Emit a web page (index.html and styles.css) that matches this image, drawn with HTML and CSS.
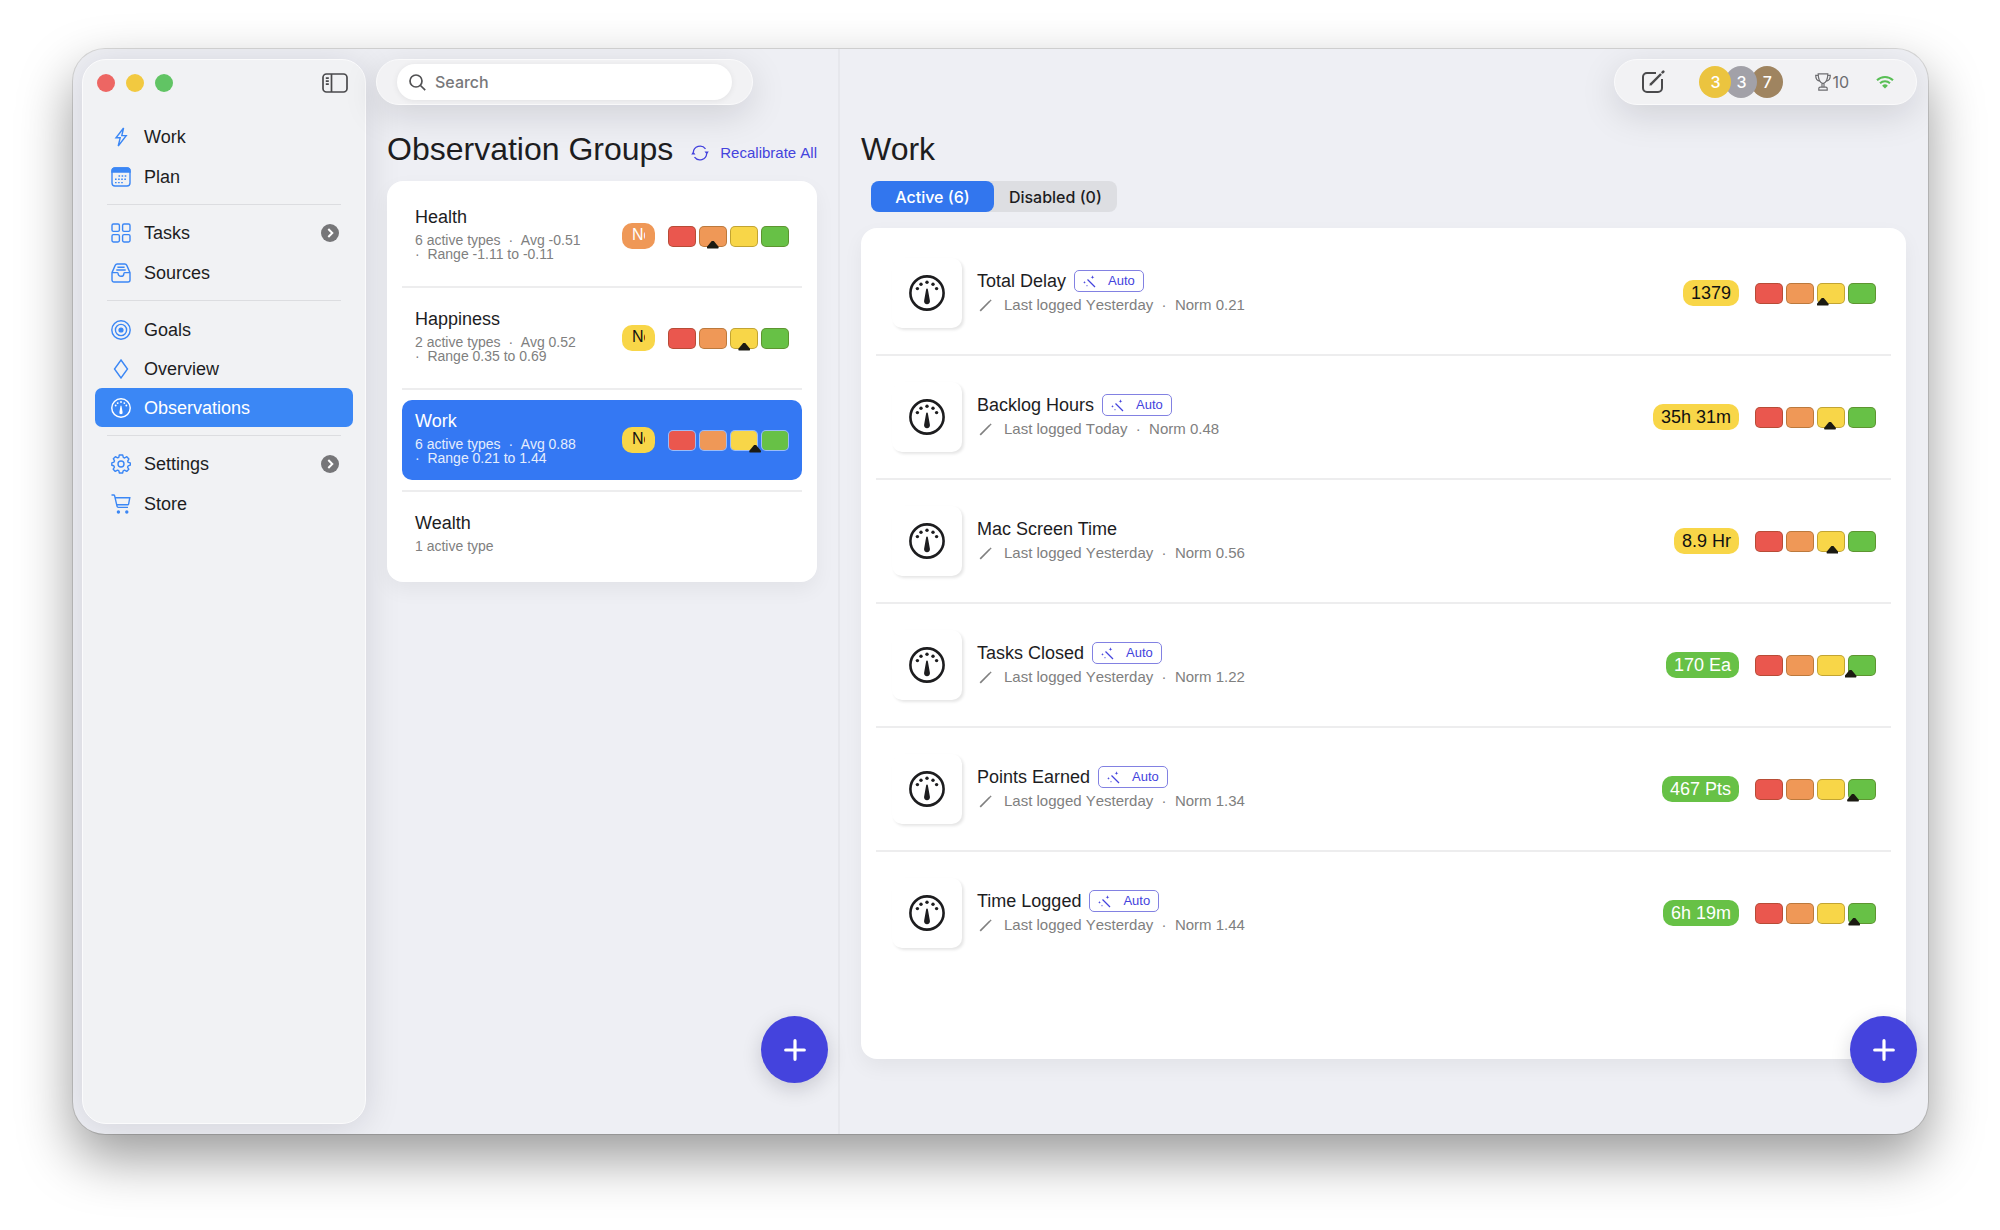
FILE: index.html
```html
<!DOCTYPE html>
<html lang="en">
<head>
<meta charset="utf-8">
<meta name="viewport" content="width=device-width, initial-scale=1">
<title>Observations</title>
<link rel="stylesheet" href="styles.css">
</head>
<body>
<svg class="sprite" aria-hidden="true">
  <symbol id="i-bolt" viewBox="0 0 20 20"><path d="M12.6 1 5 10.8h4.2L7.2 19l8-10.4H10.8z"/></symbol>
  <symbol id="i-calendar" viewBox="0 0 20 20"><rect x="1" y="1" width="18" height="18" rx="3"/><path d="M1 5V4a3 3 0 0 1 3-3h12a3 3 0 0 1 3 3v1z" fill="currentColor"/><path d="M7.5 9h8.5M4 12.3h12M4 15.6h8.5" stroke-dasharray="1.6 1.5"/></symbol>
  <symbol id="i-grid" viewBox="0 0 20 20"><rect x="1" y="1" width="7.4" height="7.4" rx="1.4"/><rect x="11.6" y="1" width="7.4" height="7.4" rx="1.4"/><rect x="1" y="11.6" width="7.4" height="7.4" rx="1.4"/><rect x="11.6" y="11.6" width="7.4" height="7.4" rx="1.4"/></symbol>
  <symbol id="i-tray" viewBox="0 0 20 20"><path d="M1 9.6 4.2 2.4Q4.8 1 6.2 1h7.6q1.4 0 2 1.4L19 9.6V17a2 2 0 0 1-2 2H3a2 2 0 0 1-2-2zM1 9.6h5.4c.5 0 .7.3.7.8a2.9 2.9 0 0 0 5.8 0c0-.5.2-.8.7-.8H19M6.4 4.3h7.2M5.3 7h9.4"/></symbol>
  <symbol id="i-target" viewBox="0 0 20 20"><circle cx="10" cy="10" r="9.2"/><circle cx="10" cy="10" r="5.6"/><circle cx="10" cy="10" r="1.900" fill="currentColor"/></symbol>
  <symbol id="i-diamond" viewBox="0 0 20 20"><path d="M10 1 16.5 10 10 19 3.500 10z"/></symbol>
  <symbol id="i-gauge" viewBox="0 0 36 36"><circle cx="18" cy="18" r="16.600"/><g fill="currentColor" stroke="none"><circle cx="8.400" cy="13.600" r="1.700"/><circle cx="12" cy="9.200" r="1.700"/><circle cx="18" cy="7.300" r="1.700"/><circle cx="24" cy="9.200" r="1.700"/><circle cx="27.600" cy="13.600" r="1.700"/><path d="M18 13.500c.5 0 .8.4.9.9l2 11.300a2.950 2.950 0 1 1-5.800 0l2-11.300c.1-.5.4-.9.9-.9z"/></g></symbol>
  <symbol id="i-gear" viewBox="0 0 20 20"><path d="M8.300 1h3.400l.6 2.400 1.300.6 2.200-1.300 2.100 2.200-1.200 2.200.5 1.300 2.100.5v2.300l-2.100.6-.6 1.300 1.200 2.200-2.100 2.100-2.200-1.200-1.300.6-.6 2.200H8.400l-.6-2.300-1.300-.5-2.200 1.200-2.100-2.200 1.200-2.100-.6-1.300L.8 11.300V8.800l2.100-.6.600-1.300-1.200-2.200 2.100-2 2.200 1.200 1.200-.6z" stroke-linejoin="round"/><circle cx="10" cy="10" r="3"/></symbol>
  <symbol id="i-cart" viewBox="0 0 20 20"><path d="M.5 1h2.300q.6 0 .8.700L6 12.200q.2 1.200 1.400 1.200h9.600M4.200 3.700h14.600l-1.200 6.400q-.1.700-.9.700H5.900"/><circle cx="7.400" cy="18" r="1" fill="currentColor"/><circle cx="15.800" cy="18" r="1" fill="currentColor"/></symbol>
  <symbol id="i-sidebar" viewBox="0 0 26 20"><rect x="1" y="1" width="24" height="18" rx="3.500"/><path d="M9.500 1v18M3.800 5.200h3M3.800 8.200h3M3.800 11.200h3"/></symbol>
  <symbol id="i-search" viewBox="0 0 17 17"><circle cx="7" cy="7" r="6"/><path d="m11.500 11.500 4.700 4.700"/></symbol>
  <symbol id="i-cycle" viewBox="0 0 18 18"><path d="M2.300 8.500a6.800 6.800 0 0 1 12.200-3.700M15.700 9.500A6.800 6.800 0 0 1 3.500 13.200"/><path d="m.2 10.500 2-3 2.300 3zM13.500 7.500l2.300 3 2-3z" fill="currentColor" stroke="none"/></symbol>
  <symbol id="i-wand" viewBox="0 0 13 13"><path d="m4.500 4.500 7.500 7.500" stroke-width="1.300"/><path d="M9.500.3l.5 1.400 1.400.5-1.400.5-.5 1.400-.5-1.400-1.400-.5L9 1.700zM1.500 5.900l.4 1 1 .4-1 .4-.4 1-.4-1-1-.4 1-.4zM4 9.800l.3.700.7.300-.7.300-.3.700-.3-.7-.7-.3.700-.3z" fill="currentColor" stroke="none"/></symbol>
  <symbol id="i-pencil" viewBox="0 0 13 13"><path d="M1.200 11.800 11 2" stroke-width="1.700"/><path d="m11.200 1.800.8-.8" stroke-width="1.700"/></symbol>
  <symbol id="i-compose" viewBox="0 0 24 24"><path d="M15 3H6a4 4 0 0 0-4 4v11a4 4 0 0 0 4 4h11a4 4 0 0 0 4-4V9"/><path d="M9.200 14.800 20 4" stroke-width="2.400"/><path d="m21.600 2.400.7-.7" stroke-width="2.600" stroke-linecap="round"/><path d="m8.300 15.700 1-2.200 1.200 1.200z" fill="currentColor" stroke="none"/></symbol>
  <symbol id="i-trophy" viewBox="0 0 16 18"><path d="M3.200.8h9.600c0 5.200-1 8.800-4.800 9.700-3.800-.9-4.800-4.500-4.800-9.700zM3.200 2.300H.7c0 3.200 1 5.400 3.900 5.900M12.800 2.300h2.500c0 3.200-1 5.400-3.900 5.900M7 10.400v3.800M9 10.400v3.800M3.800 17.200v-1.600q0-1.400 1.400-1.400h5.600q1.400 0 1.400 1.400v1.600z"/></symbol>
  <symbol id="i-wifi" viewBox="0 0 18 14"><path d="M1 5.200a11.500 11.500 0 0 1 16 0M4 8.300a7.200 7.200 0 0 1 10 0"/><path d="m9 13.600-2.900-2.900a4.200 4.200 0 0 1 5.800 0z" fill="currentColor" stroke="none"/></symbol>
  <symbol id="i-plus" viewBox="0 0 22 22"><path d="M11 1.700v18.600M1.700 11h18.600"/></symbol>
  <symbol id="i-chevron" viewBox="0 0 18 18"><path d="m7.300 5 4 4-4 4"/></symbol>
</svg>

<div class="window">
  <aside class="sidebar">
    <div class="titlebar">
      <button class="light light-close" aria-label="Close"></button>
      <button class="light light-min" aria-label="Minimize"></button>
      <button class="light light-zoom" aria-label="Zoom"></button>
      <button class="toggle" aria-label="Toggle sidebar"><svg class="icon"><use href="#i-sidebar"/></svg></button>
    </div>
    <nav aria-label="Main">
      <ul class="nav-group">
        <li><a class="nav-item" href="#work"><svg class="icon"><use href="#i-bolt"/></svg>Work</a></li>
        <li><a class="nav-item" href="#plan"><svg class="icon"><use href="#i-calendar"/></svg>Plan</a></li>
      </ul>
      <ul class="nav-group">
        <li><a class="nav-item" href="#tasks"><svg class="icon"><use href="#i-grid"/></svg>Tasks<svg class="more"><use href="#i-chevron"/></svg></a></li>
        <li><a class="nav-item" href="#sources"><svg class="icon"><use href="#i-tray"/></svg>Sources</a></li>
      </ul>
      <ul class="nav-group nav-group-tight">
        <li><a class="nav-item" href="#goals"><svg class="icon"><use href="#i-target"/></svg>Goals</a></li>
        <li><a class="nav-item" href="#overview"><svg class="icon"><use href="#i-diamond"/></svg>Overview</a></li>
        <li><a class="nav-item nav-current" href="#observations" aria-current="page"><svg class="icon icon-gauge"><use href="#i-gauge"/></svg>Observations</a></li>
      </ul>
      <ul class="nav-group">
        <li><a class="nav-item" href="#settings"><svg class="icon"><use href="#i-gear"/></svg>Settings<svg class="more"><use href="#i-chevron"/></svg></a></li>
        <li><a class="nav-item" href="#store"><svg class="icon"><use href="#i-cart"/></svg>Store</a></li>
      </ul>
    </nav>
  </aside>

  <section class="pane groups-pane">
    <div class="pill search-pill">
      <label class="search"><svg class="icon"><use href="#i-search"/></svg><input type="search" placeholder="Search" aria-label="Search"></label>
    </div>
    <header class="pane-head">
      <h1>Observation Groups</h1>
      <button class="recalibrate"><svg class="icon"><use href="#i-cycle"/></svg>Recalibrate All</button>
    </header>
    <ul class="card groups">
      <li><a class="group" href="#health">
        <span class="group-text"><span class="title">Health</span><span class="meta">6 active types&nbsp; · &nbsp;Avg -0.51<br>·&nbsp; Range -1.11 to -0.11</span></span>
        <span class="badge badge-clip badge-orange"><span>No</span></span>
        <span class="scale"><i></i><i></i><i></i><i></i><b style="left:37%"></b></span>
      </a></li>
      <li><a class="group" href="#happiness">
        <span class="group-text"><span class="title">Happiness</span><span class="meta">2 active types&nbsp; · &nbsp;Avg 0.52<br>·&nbsp; Range 0.35 to 0.69</span></span>
        <span class="badge badge-clip badge-yellow"><span>No</span></span>
        <span class="scale"><i></i><i></i><i></i><i></i><b style="left:63%"></b></span>
      </a></li>
      <li><a class="group group-current" href="#work-group" aria-current="true">
        <span class="group-text"><span class="title">Work</span><span class="meta">6 active types&nbsp; · &nbsp;Avg 0.88<br>·&nbsp; Range 0.21 to 1.44</span></span>
        <span class="badge badge-clip badge-yellow"><span>No</span></span>
        <span class="scale"><i></i><i></i><i></i><i></i><b style="left:72%"></b></span>
      </a></li>
      <li><a class="group" href="#wealth">
        <span class="group-text"><span class="title">Wealth</span><span class="meta">1 active type</span></span>
      </a></li>
    </ul>
    <button class="fab" aria-label="Add group"><svg class="icon"><use href="#i-plus"/></svg></button>
  </section>

  <main class="pane detail-pane">
    <div class="pill status-pill">
      <button class="compose" aria-label="Compose"><svg class="icon"><use href="#i-compose"/></svg></button>
      <span class="medals"><span class="medal gold">3</span><span class="medal silver">3</span><span class="medal bronze">7</span></span>
      <span class="trophies"><svg class="icon"><use href="#i-trophy"/></svg>10</span>
      <svg class="icon wifi"><use href="#i-wifi"/></svg>
    </div>
    <header class="pane-head"><h2>Work</h2></header>
    <div class="segmented">
      <button class="segment segment-on" aria-pressed="true">Active (6)</button>
      <button class="segment" aria-pressed="false">Disabled (0)</button>
    </div>
    <ul class="card types">
      <li class="type">
        <span class="tile"><svg class="icon"><use href="#i-gauge"/></svg></span>
        <div class="type-text"><div class="type-name">Total Delay<span class="tag"><svg class="icon"><use href="#i-wand"/></svg>Auto</span></div>
        <div class="type-meta"><svg class="icon"><use href="#i-pencil"/></svg>Last logged Yesterday&nbsp; · &nbsp;Norm 0.21</div></div>
        <span class="badge badge-yellow">1379</span>
        <span class="scale"><i></i><i></i><i></i><i></i><b style="left:56%"></b></span>
      </li>
      <li class="type">
        <span class="tile"><svg class="icon"><use href="#i-gauge"/></svg></span>
        <div class="type-text"><div class="type-name">Backlog Hours<span class="tag"><svg class="icon"><use href="#i-wand"/></svg>Auto</span></div>
        <div class="type-meta"><svg class="icon"><use href="#i-pencil"/></svg>Last logged Today&nbsp; · &nbsp;Norm 0.48</div></div>
        <span class="badge badge-yellow">35h 31m</span>
        <span class="scale"><i></i><i></i><i></i><i></i><b style="left:62%"></b></span>
      </li>
      <li class="type">
        <span class="tile"><svg class="icon"><use href="#i-gauge"/></svg></span>
        <div class="type-text"><div class="type-name">Mac Screen Time</div>
        <div class="type-meta"><svg class="icon"><use href="#i-pencil"/></svg>Last logged Yesterday&nbsp; · &nbsp;Norm 0.56</div></div>
        <span class="badge badge-yellow">8.9 Hr</span>
        <span class="scale"><i></i><i></i><i></i><i></i><b style="left:64%"></b></span>
      </li>
      <li class="type">
        <span class="tile"><svg class="icon"><use href="#i-gauge"/></svg></span>
        <div class="type-text"><div class="type-name">Tasks Closed<span class="tag"><svg class="icon"><use href="#i-wand"/></svg>Auto</span></div>
        <div class="type-meta"><svg class="icon"><use href="#i-pencil"/></svg>Last logged Yesterday&nbsp; · &nbsp;Norm 1.22</div></div>
        <span class="badge badge-green">170 Ea</span>
        <span class="scale"><i></i><i></i><i></i><i></i><b style="left:79%"></b></span>
      </li>
      <li class="type">
        <span class="tile"><svg class="icon"><use href="#i-gauge"/></svg></span>
        <div class="type-text"><div class="type-name">Points Earned<span class="tag"><svg class="icon"><use href="#i-wand"/></svg>Auto</span></div>
        <div class="type-meta"><svg class="icon"><use href="#i-pencil"/></svg>Last logged Yesterday&nbsp; · &nbsp;Norm 1.34</div></div>
        <span class="badge badge-green">467 Pts</span>
        <span class="scale"><i></i><i></i><i></i><i></i><b style="left:81%"></b></span>
      </li>
      <li class="type">
        <span class="tile"><svg class="icon"><use href="#i-gauge"/></svg></span>
        <div class="type-text"><div class="type-name">Time Logged<span class="tag"><svg class="icon"><use href="#i-wand"/></svg>Auto</span></div>
        <div class="type-meta"><svg class="icon"><use href="#i-pencil"/></svg>Last logged Yesterday&nbsp; · &nbsp;Norm 1.44</div></div>
        <span class="badge badge-green">6h 19m</span>
        <span class="scale"><i></i><i></i><i></i><i></i><b style="left:82%"></b></span>
      </li>
    </ul>
    <button class="fab" aria-label="Add observation type"><svg class="icon"><use href="#i-plus"/></svg></button>
  </main>
</div>
</body>
</html>
```
FILE: styles.css
```css
*, *::before, *::after { box-sizing: border-box; }

:root {
  --text: #1d1d1f;
  --muted: #808080;
  --accent: #4443dd;
  --blue: #3b87f5;
  --red: #ea574e;
  --orange: #ef9857;
  --yellow: #f8d648;
  --green: #67c146;
}

body {
  margin: 0;
  min-height: 100vh;
  display: flex;
  padding: 49px 72px 96px 73px;
  background: #fff;
  color: var(--text);
  font: 18px/22px "Liberation Sans", Arial, sans-serif;
}

ul { list-style: none; margin: 0; padding: 0; }
a { color: inherit; text-decoration: none; }
button { border: 0; padding: 0; margin: 0; background: none; color: inherit; font: inherit; }
h1, h2 { margin: 0; font-size: 32px; line-height: 36px; font-weight: 400; white-space: nowrap; }
.sprite { position: absolute; width: 0; height: 0; }

.icon {
  flex: none;
  display: block;
  width: 20px;
  height: 20px;
  fill: none;
  stroke: currentColor;
  stroke-width: 1.4;
}

.window {
  flex: 1;
  display: grid;
  grid-template-columns: 293px 474px minmax(0, 1fr);
  border-radius: 32px;
  background: #eeeff4;
  box-shadow: 0 0 0 1px rgba(0, 0, 0, .13), 0 24px 54px rgba(0, 0, 0, .4);
  overflow: clip;
}

/* Sidebar */
.sidebar {
  margin: 10px 0 10px 9px;
  padding: 0 13px;
  border: 1px solid #fbfbfc;
  border-radius: 24px;
  background: #f1f2f4;
  box-shadow: 0 4px 36px rgba(0, 0, 30, .12);
}
.titlebar { display: flex; align-items: center; gap: 11px; height: 45px; padding: 0 4px 0 1px; }
.light { width: 18px; height: 18px; border-radius: 50%; }
.light-close { background: #ed6663; }
.light-min { background: #f2c940; }
.light-zoom { background: #61c464; }
.toggle { margin-left: auto; color: #4a4a4c; }
.toggle .icon { width: 26px; stroke-width: 1.7; }
.sidebar nav { margin: 12px -1px 0; }
.nav-group { display: grid; gap: 1px; }
.nav-group-tight { gap: 0; }
.nav-group + .nav-group::before {
  content: "";
  height: 1px;
  margin: 8px 12px 7px;
  background: #dcdde0;
}
.nav-group-tight.nav-group::before { margin-bottom: 9px; }
.nav-item {
  display: flex;
  align-items: center;
  gap: 13px;
  height: 39px;
  padding: 0 14px 0 16px;
  border-radius: 7px;
}
.nav-item .icon { color: var(--blue); }
.nav-item .icon-gauge { stroke-width: 2.6; }
.nav-current { background: var(--blue); color: #fff; }
.nav-current .icon { color: #fff; }
.more {
  width: 18px;
  height: 18px;
  margin-left: auto;
  border-radius: 50%;
  background: #767678;
  fill: none;
  stroke: #fff;
  stroke-width: 2;
}

/* Panes */
.pane { position: relative; display: flex; flex-direction: column; }
.groups-pane { padding: 10px 21px 75px; border-right: 2px solid #e6e7ec; }
.detail-pane { padding: 10px 22px 75px 21px; }
.pill {
  display: flex;
  align-items: center;
  height: 46px;
  border: 1px solid #fafafb;
  border-radius: 23px;
  background: #f2f2f4;
  box-shadow: 0 10px 36px rgba(0, 0, 20, .13);
}
.search-pill { width: 377px; margin-left: -11px; padding: 0 20px; }
.search {
  flex: 1;
  display: flex;
  align-items: center;
  gap: 9px;
  height: 36px;
  padding: 0 12px;
  border-radius: 18px;
  background: #fff;
  box-shadow: 0 1px 6px rgba(0, 0, 0, .07);
}
.search .icon { width: 17px; height: 17px; color: #515153; stroke-width: 1.7; }
.search input {
  flex: 1;
  min-width: 0;
  border: 0;
  padding: 0;
  background: none;
  outline: 0;
  font: 500 16px/20px Inter, sans-serif;
  color: var(--text);
}
.search input::placeholder { color: #77777a; opacity: 1; }

.pane-head { display: flex; justify-content: space-between; margin: 26px 0 14px; }
.recalibrate {
  display: flex;
  align-items: center;
  gap: 11px;
  padding-top: 8px;
  color: var(--accent);
  font-size: 15px;
  line-height: 20px;
  font-kerning: none;
}
.recalibrate .icon { width: 18px; height: 18px; stroke-width: 1.3; }

.card {
  padding: 0 15px;
  border-radius: 16px;
  background: #fff;
  box-shadow: 0 8px 20px rgba(0, 0, 20, .05);
}

/* Group list */
.groups { padding-top: 15px; }
.groups li + li { margin-top: 10px; padding-top: 10px; border-top: 2px solid #ededee; }
.group {
  display: flex;
  align-items: center;
  min-height: 80px;
  padding: 0 13px;
  border-radius: 10px;
}
.group-text { flex: 1; align-self: flex-start; padding-top: 10px; white-space: nowrap; }
.title, .meta { display: block; }
.meta { margin-top: 5px; color: var(--muted); font-size: 14px; line-height: 14px; }
.group .scale { margin-left: 13px; }
.group-current { background: #3478f3; color: #fff; }
.group-current .meta { color: #e4edfd; }

.badge {
  flex: none;
  height: 26px;
  padding: 2px 8px;
  border-radius: 10px;
}
.badge-orange { background: var(--orange); color: #fff; }
.badge-yellow { background: var(--yellow); color: #111; }
.badge-green { background: var(--green); color: #fff; }
.badge-clip { width: 33px; padding: 1px 10px 3px; font-size: 16px; }
.badge-clip span { display: block; overflow: hidden; }

.scale { position: relative; flex: none; display: flex; gap: 3px; }
.scale i {
  width: 28px;
  height: 21px;
  border: 1px solid rgba(70, 50, 0, .3);
  border-radius: 5px;
}
.scale i:nth-child(1) { background-color: var(--red); }
.scale i:nth-child(2) { background-color: var(--orange); }
.scale i:nth-child(3) { background-color: var(--yellow); }
.scale i:nth-child(4) { background-color: var(--green); }
.group-current .scale i { border-color: rgba(255, 255, 255, .5); background-clip: padding-box; }
.scale b {
  position: absolute;
  bottom: -2px;
  width: 12px;
  height: 8px;
  margin-left: -6px;
  background: #1b1a12;
  clip-path: polygon(45% 0, 55% 0, 100% 80%, 96% 100%, 4% 100%, 0 80%);
}

/* Status bar */
.status-pill { align-self: flex-end; margin-right: -11px; padding: 0 22px 0 26px; color: #6d6d70; font: 400 16px/20px Inter, sans-serif; }
.compose { color: #4a4a4c; }
.compose .icon { width: 24px; height: 24px; stroke-width: 2; }
.medals { display: flex; margin-left: 34px; }
.medal {
  position: relative;
  width: 32px;
  height: 32px;
  border-radius: 50%;
  color: #fff;
  font-weight: 500;
  line-height: 32px;
  text-align: center;
}
.medal + .medal { margin-left: -6px; }
.gold { z-index: 3; background: #ebc43f; }
.silver { z-index: 2; background: #a2a1a8; }
.bronze { z-index: 1; background: #9f8460; }
.trophies { display: flex; align-items: center; gap: 1px; margin-left: 32px; }
.trophies .icon { width: 16px; height: 18px; stroke-width: 1.2; }
.wifi { width: 18px; height: 14px; margin-left: 27px; color: #59bf55; stroke-width: 2; }

/* Type list */
.segmented {
  align-self: flex-start;
  display: grid;
  grid-template-columns: 1fr 1fr;
  margin: 0 0 16px 10px;
  border-radius: 8px;
  background: #dddee2;
}
.segment { height: 31px; padding: 0 15px; border-radius: 8px; font: 500 16px/20px Inter, sans-serif; }
.segment-on { background: #3276ee; color: #fff; }
.types { flex: 1; padding-top: 4px; }
.type { display: flex; align-items: center; height: 124px; padding: 0 15px 0 16px; border-bottom: 2px solid #ededee; }
.type:last-child { border-bottom-color: transparent; }
.tile {
  flex: none;
  display: grid;
  place-items: center;
  width: 70px;
  height: 70px;
  border-radius: 10px;
  background: #fff;
  box-shadow: 2px 2px 3px rgba(0, 0, 0, .1);
}
.tile .icon { width: 36px; height: 36px; stroke-width: 2.6; }
.type-text { flex: 1; min-width: 0; margin-left: 15px; }
.type-name { display: flex; align-items: center; gap: 8px; height: 24px; }
.tag {
  display: flex;
  align-items: center;
  gap: 12px;
  height: 22px;
  padding: 0 8px;
  border: 1px solid #8281e2;
  border-radius: 5px;
  color: var(--accent);
  font-size: 13px;
}
.tag .icon { width: 13px; height: 13px; }
.type-meta { display: flex; align-items: center; height: 24px; color: var(--muted); font-size: 15px; font-kerning: none; white-space: pre; }
.type-meta .icon { width: 13px; height: 13px; margin: 0 12px 0 2px; }
.type .scale { margin-left: 16px; }

.fab {
  position: absolute;
  right: 11px;
  bottom: 51px;
  z-index: 4;
  display: grid;
  place-items: center;
  width: 67px;
  height: 67px;
  border-radius: 50%;
  background: var(--accent);
  color: #fff;
  box-shadow: 0 6px 20px rgba(0, 0, 30, .16);
}
.groups-pane .fab { right: 10px; }
.fab .icon { width: 22px; height: 22px; stroke-width: 3.2; stroke-linecap: round; }
```
